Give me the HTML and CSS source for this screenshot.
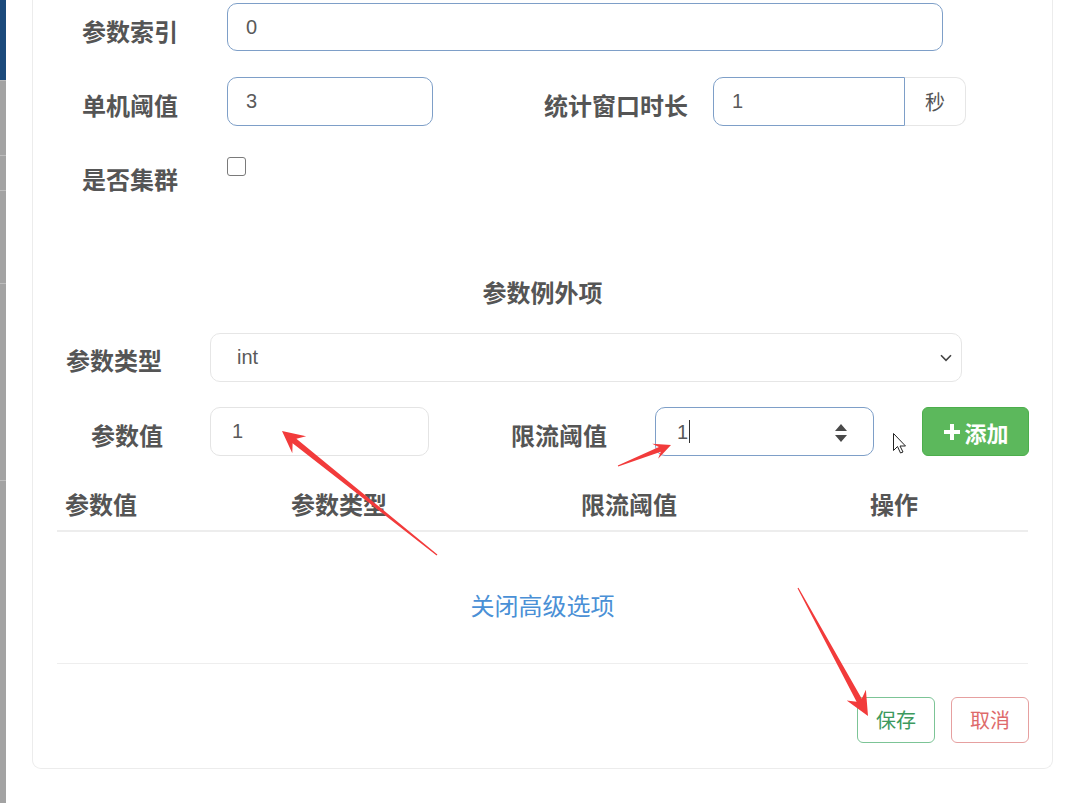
FILE: index.html
```html
<!DOCTYPE html>
<html lang="zh-CN">
<head>
<meta charset="utf-8">
<title>参数例外项</title>
<link rel="stylesheet" href="styles.css">
</head>
<body>
<div class="page">
  <div class="strip"></div>
  <div class="main">
    <div class="card">
      <div class="row r1">
        <label class="lbl w-a">参数索引</label>
        <input class="ctl focus w-idx" type="text" value="0" readonly>
      </div>
      <div class="row r2">
        <label class="lbl w-a">单机阈值</label>
        <input class="ctl focus w-single" type="text" value="3" readonly>
        <label class="lbl w-win">统计窗口时长</label>
        <div class="group">
          <input class="ctl focus grp-in" type="text" value="1" readonly>
          <span class="addon">秒</span>
        </div>
      </div>
      <div class="row r3">
        <label class="lbl w-a">是否集群</label>
        <span class="check"></span>
      </div>

      <div class="section-title">参数例外项</div>

      <div class="row r4">
        <label class="lbl w-type">参数类型</label>
        <div class="ctl select">
          <span>int</span>
          <svg class="chev" width="12" height="8" viewBox="0 0 12 8"><path d="M1 1.2 L6 6.4 L11 1.2" fill="none" stroke="#444" stroke-width="1.6"/></svg>
        </div>
      </div>

      <div class="row r5">
        <label class="lbl w-val">参数值</label>
        <input class="ctl w-param" type="text" value="1" readonly>
        <label class="lbl w-limit">限流阈值</label>
        <div class="ctl focus num">
          <span class="num-text">1</span><span class="caret"></span>
          <svg class="spin" width="12" height="18" viewBox="0 0 12 18"><path d="M6 0 L12 7 L0 7 Z M0 11 L12 11 L6 18 Z" fill="#4a4a4a"/></svg>
        </div>
        <button class="btn-add" type="button">
          <svg width="16" height="16" viewBox="0 0 16 16"><path d="M6 0h4v6h6v4h-6v6h-4v-6h-6v-4h6z" fill="#fff"/></svg>
          <span>添加</span>
        </button>
      </div>

      <div class="table">
        <div class="th">参数值</div>
        <div class="th">参数类型</div>
        <div class="th">限流阈值</div>
        <div class="th">操作</div>
      </div>

      <a class="toggle">关闭高级选项</a>

      <div class="footer">
        <button class="btn btn-save" type="button">保存</button>
        <button class="btn btn-cancel" type="button">取消</button>
      </div>
    </div>
  </div>
</div>

<svg class="overlay" width="1072" height="803" viewBox="0 0 1072 803">
  <g fill="#f23b3b">
    <polygon points="437.4,554.5 296.4,438.7 306.1,436.2 282,431 292.3,453.3 292.6,443.3 436.6,555.5"/>
    <polygon points="618.2,466.6 660.8,451.7 658.1,458.7 671,445 652.2,443.8 658.9,447.1 617.8,465.4"/>
    <polygon points="797.5,588.3 856.6,701.8 846.7,700.4 868,716 865.9,689.7 861.8,698.8 798.5,587.7"/>
  </g>
  <polygon points="893.5,433.5 893.5,450.5 897.5,446.5 900.5,453 903,452 900,446 905.5,446" fill="#fff" stroke="#222" stroke-width="1" stroke-linejoin="round"/>
</svg>
</body>
</html>
```

FILE: styles.css
```css
* { box-sizing: border-box; }

html, body {
  margin: 0;
  padding: 0;
  background: #fff;
}

body {
  font-family: "Liberation Sans", "Noto Sans CJK SC", sans-serif;
  color: #555;
  position: relative;
  width: 1072px;
  height: 803px;
  overflow: hidden;
}

.page {
  display: flex;
  height: 803px;
}

.strip {
  width: 6px;
  flex: none;
  background:
    linear-gradient(to bottom,
      #1b4a7b 0, #1b4a7b 80px,
      #b9b9b9 80px, #b9b9b9 81px,
      #a3a3a3 81px, #a3a3a3 155px,
      #bdbdbd 155px, #bdbdbd 156px,
      #a3a3a3 156px, #a3a3a3 190px,
      #bdbdbd 190px, #bdbdbd 191px,
      #a3a3a3 191px, #a3a3a3 283px,
      #bdbdbd 283px, #bdbdbd 284px,
      #a3a3a3 284px, #a3a3a3 480px,
      #bdbdbd 480px, #bdbdbd 481px,
      #a3a3a3 481px);
}

.main {
  flex: 1;
  padding: 0 19px 0 26px;
}

.card {
  height: 769px;
  border: 1px solid #ececec;
  border-top: none;
  border-radius: 0 0 9px 9px;
  display: flex;
  flex-direction: column;
}

.row {
  display: flex;
  align-items: flex-start;
}

.lbl {
  flex: none;
  font-family: "Noto Sans CJK SC", sans-serif;
  font-size: 24px;
  font-weight: bold;
  line-height: 24px;
  padding-top: 16px;
  text-align: right;
  color: #555;
}

.ctl {
  flex: none;
  height: 48px;
  border: 1px solid #e3e3e3;
  border-radius: 10px;
  background: #fff;
  font-family: "Liberation Sans", sans-serif;
  font-size: 20px;
  color: #5a5a5a;
  padding: 0 0 0 18px;
  outline: none;
  margin: 0;
}

.focus {
  border-color: #7e9fc8;
}

.r1 { margin-top: 3px; }
.w-a { width: 145px; margin-right: 49px; }
.w-idx { width: 716px; }

.r2 { margin-top: 26px; }
.r2 .ctl { height: 49px; }
.w-single { width: 206px; }
.w-win { width: 255px; margin-right: 25px; }

.group {
  display: flex;
  flex: none;
}
.grp-in {
  width: 192px;
  border-radius: 10px 0 0 10px;
}
.addon {
  width: 61px;
  height: 49px;
  border: 1px solid #e6e6e6;
  border-left: none;
  border-radius: 0 10px 10px 0;
  display: flex;
  align-items: center;
  justify-content: center;
  font-family: "Noto Sans CJK SC", sans-serif;
  font-size: 20px;
  color: #555;
}

.r3 {
  margin-top: 26px;
  height: 48px;
}
.r3 .lbl { padding-top: 15px; }
.check {
  width: 19px;
  height: 19px;
  margin-top: 5px;
  border: 1px solid #7a7a7a;
  border-radius: 3px;
  background: #fff;
}

.section-title {
  margin-top: 80px;
  text-align: center;
  font-family: "Noto Sans CJK SC", sans-serif;
  font-size: 24px;
  font-weight: bold;
  line-height: 24px;
  color: #555;
}

.r4 { margin-top: 29px; }
.r4 .lbl { padding-top: 15px; }
.w-type { width: 129px; margin-right: 48px; }
.select {
  width: 752px;
  height: 49px;
  display: flex;
  align-items: center;
  justify-content: space-between;
  padding: 0 9px 0 26px;
  border-color: #e6e6e6;
}
.chev { display: block; margin-top: 1px; }

.r5 { margin-top: 25px; }
.r5 .ctl { height: 49px; }
.w-val { width: 130px; margin-right: 47px; }
.w-param { width: 219px; border-color: #e4e4e4; padding-left: 21px; }
.w-limit { width: 178px; margin-right: 48px; }
.num {
  width: 219px;
  display: flex;
  align-items: center;
  padding-left: 21px;
  padding-right: 26px;
}
.num-text { line-height: 24px; }
.caret {
  width: 1px;
  height: 23px;
  background: #333;
  margin-left: 1px;
}
.spin {
  display: block;
  margin-left: auto;
  margin-top: 2px;
}

.btn-add {
  flex: none;
  margin-left: 48px;
  width: 107px;
  height: 49px;
  border: 1px solid #4cae4c;
  border-radius: 6px;
  background: #5cb85c;
  color: #fff;
  display: flex;
  align-items: center;
  justify-content: center;
  gap: 4px;
  padding: 0 0 0 2px;
  font-family: "Noto Sans CJK SC", sans-serif;
  font-size: 22px;
  font-weight: bold;
  line-height: 24px;
}
.btn-add svg { display: block; margin-top: 1px; }

.table {
  margin: 0 24px;
  padding-top: 36px;
  display: grid;
  grid-template-columns: 226px 290px 289px 1fr;
  border-bottom: 2px solid #ededed;
}
.th {
  padding: 0 0 14px 8px;
  font-family: "Noto Sans CJK SC", sans-serif;
  font-size: 24px;
  font-weight: bold;
  line-height: 24px;
  color: #555;
}

.toggle {
  display: block;
  margin-top: 61px;
  text-align: center;
  font-family: "Noto Sans CJK SC", sans-serif;
  font-size: 24px;
  line-height: 24px;
  color: #4a90d6;
  cursor: pointer;
}

.footer {
  margin: 46px 24px 0;
  border-top: 1px solid #eeeeee;
  padding-top: 33px;
  display: flex;
  justify-content: flex-end;
  gap: 16px;
}
.btn {
  width: 78px;
  height: 46px;
  border-radius: 6px;
  background: #fff;
  font-family: "Noto Sans CJK SC", sans-serif;
  font-size: 20px;
  line-height: 24px;
  padding: 0;
}
.btn-cancel { margin-right: -1px; }
.btn-save {
  border: 1px solid #7cc496;
  color: #3d9a5e;
}
.btn-cancel {
  border: 1px solid #e6a0a0;
  color: #de6a6a;
}

.overlay {
  position: absolute;
  left: 0;
  top: 0;
  pointer-events: none;
}
```
